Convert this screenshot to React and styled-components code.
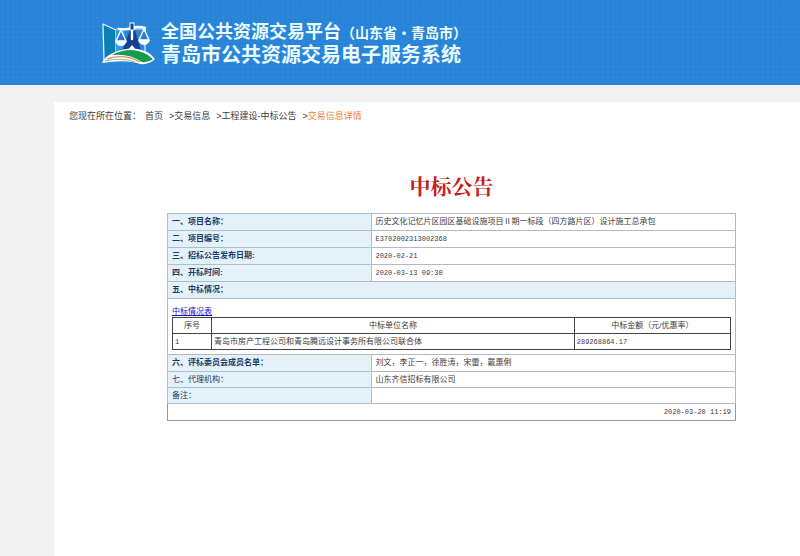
import React from 'react';
import styled, { createGlobalStyle } from 'styled-components';

const crumbs = ['交易信息', '工程建设-中标公告'];

const info = [
  { label: '一、项目名称：', value: '历史文化记忆片区园区基础设施项目Ⅱ期一标段（四方路片区）设计施工总承包' },
  { label: '二、项目编号：', value: 'E3702002313002368', code: true },
  { label: '三、招标公告发布日期:', value: '2020-02-21', code: true },
  { label: '四、开标时间:', value: '2020-03-13 09:30', code: true },
];

const extra = [
  { label: '六、评标委员会成员名单：', value: '刘文，李正一，徐胜涛，宋雷，戴惠俐' },
  { label: '七、代理机构：', value: '山东齐信招标有限公司', plain: true },
  { label: '备注：', value: '', plain: true },
];

const Logo = () => (
  <svg width="54" height="44" viewBox="0 0 54 44" aria-hidden="true">
    <path d="M1 2 L14 8 V33 L2 38 Z" fill="#0d7fb4" stroke="#e9fbff" strokeWidth="1.2" strokeLinejoin="round" />
    <path d="M14 7 H23 V31 L14 33 Z" fill="#2aa0dc" />
    <path d="M14 7 H43 V31" fill="none" stroke="#d8f4ff" strokeWidth="1.2" />
    <path d="M28 8 H33 L39 29 H20 Z" fill="#173f96" />
    <path d="M30 9 V17 M17 7 Q24 8 30 6 Q36 4 43 6" fill="none" stroke="#fff" strokeWidth="2.4" strokeLinecap="round" />
    <rect x="28" y="1" width="4" height="7" fill="#173f96" stroke="#fff" strokeWidth="1" />
    <path d="M19 8 L14 19 H24 Z M42 7 L37 18 H47 Z" fill="#2b79cf" stroke="#fff" strokeWidth="1.4" strokeLinejoin="round" />
    <path d="M13 19 H25 Q23 24 19 24 Q15 24 13 19 Z M36 18 H48 Q46 23 42 23 Q38 23 36 18 Z" fill="#fff" />
    <path d="M25 29 L30 23 L35 29 Z" fill="#fff" />
    <path d="M0 41 Q3 34 13 30 Q25 25 36 27 Q47 29 53 37 Q47 43 38 42 Q25 37 0 41 Z" fill="#fff" />
    <path d="M10 33 Q19 28 30 28 Q43 29 51 37 Q46 41 40 40 Q27 31 10 33 Z" fill="#159b50" />
    <path d="M5 37 Q22 31 38 40" fill="none" stroke="#e8935c" strokeWidth="1.4" />
    <path d="M3 39 Q18 35 33 40" fill="none" stroke="#86c58a" strokeWidth="1" />
  </svg>
);

const App = () => {
  return (
    <>
      <GlobalStyle />
      <Header>
        <Logo />
        <Brand>
          <BrandLine>
            全国公共资源交易平台<Region>（山东省・青岛市）</Region>
          </BrandLine>
          <SystemName>青岛市公共资源交易电子服务系统</SystemName>
        </Brand>
      </Header>
      <Page>
        <Crumbs>
          <span>您现在所在位置：</span>
          <CrumbList>
            <CrumbLink href="#">首页</CrumbLink>
            {crumbs.map((name) => (
              <span key={name}>
                &gt;<CrumbLink href="#">{name}</CrumbLink>
              </span>
            ))}
            <span>
              &gt;<Current>交易信息详情</Current>
            </span>
          </CrumbList>
        </Crumbs>
        <Notice>
          <Title>中标公告</Title>
          <InfoTable>
            <colgroup>
              <LabelCol />
              <col />
            </colgroup>
            <tbody>
              {info.map((row) => (
                <tr key={row.label}>
                  <Label scope="row">{row.label}</Label>
                  <Value $code={row.code}>{row.value}</Value>
                </tr>
              ))}
              <tr>
                <Label scope="row" colSpan={2}>五、中标情况：</Label>
              </tr>
              <tr>
                <BidCell colSpan={2}>
                  <BidLink href="#bids">中标情况表</BidLink>
                  <BidTable id="bids">
                    <colgroup>
                      <NoCol />
                      <UnitCol />
                      <col />
                    </colgroup>
                    <thead>
                      <tr>
                        <th>序号</th>
                        <th>中标单位名称</th>
                        <th>中标金额（元/优惠率）</th>
                      </tr>
                    </thead>
                    <tbody>
                      <tr>
                        <td><Code>1</Code></td>
                        <td>青岛市房产工程公司和青岛腾远设计事务所有限公司联合体</td>
                        <td><Code>289268864.17</Code></td>
                      </tr>
                    </tbody>
                  </BidTable>
                </BidCell>
              </tr>
              {extra.map((row) => (
                <tr key={row.label}>
                  <Label scope="row" $plain={row.plain}>{row.label}</Label>
                  <Value>{row.value}</Value>
                </tr>
              ))}
              <tr>
                <Stamp colSpan={2}>2020-03-20 11:19</Stamp>
              </tr>
            </tbody>
          </InfoTable>
        </Notice>
      </Page>
    </>
  );
};

const GlobalStyle = createGlobalStyle`
  * {
    box-sizing: border-box;
  }
  html {
    height: 100%;
  }
  body {
    height: 100%;
    margin: 0;
    background: #f2f2f2;
    color: #3c3c3c;
    font-family: "Liberation Sans", "Noto Sans CJK SC", sans-serif;
    font-size: 8px;
  }
  #root {
    display: flex;
    flex-direction: column;
    min-height: 100%;
  }
`

const Header = styled.header`
  display: flex;
  align-items: center;
  gap: 5px;
  height: 85px;
  padding: 2px 0 0 102px;
  background-color: #2a86d9;
  background-image:
    repeating-linear-gradient(90deg, rgba(10, 90, 190, 0.07) 0 1px, transparent 1px 5px),
    repeating-linear-gradient(0deg, rgba(10, 90, 190, 0.07) 0 1px, transparent 1px 5px);
`

const Brand = styled.div`
  color: #e9fbff;
  font-weight: 700;
  white-space: nowrap;
`

const BrandLine = styled.div`
  font-size: 18px;
  line-height: 22px;
`

const Region = styled.span`
  font-size: 14px;
`

const SystemName = styled.div`
  font-size: 20px;
  line-height: 22px;
`

const Page = styled.main`
  flex: 1;
  margin: 17px 0 0 54px;
  padding: 7px 0 0 15px;
  background: #fff;
`

const Crumbs = styled.nav`
  display: flex;
  gap: 4px;
  font-size: 9px;
  line-height: 14px;
  white-space: nowrap;
`

const CrumbList = styled.div`
  display: flex;
  gap: 6px;
`

const CrumbLink = styled.a`
  color: inherit;
  text-decoration: none;
`

const Current = styled.span`
  color: #f0843a;
`

const Notice = styled.section`
  margin: 48px 64px 0 98px;
`

const Title = styled.h1`
  margin: 0 0 10px;
  color: #c32020;
  font-family: "Liberation Serif", "Noto Serif CJK SC", "Noto Sans CJK SC", serif;
  font-size: 21px;
  font-weight: 700;
  line-height: 32px;
  text-align: center;
`

const InfoTable = styled.table`
  width: 100%;
  table-layout: fixed;
  border-collapse: collapse;
  border: 1px solid #999;
`

const LabelCol = styled.col`
  width: 36%;
`

const Label = styled.th`
  height: ${props => props.$plain ? '16px' : '17px'};
  padding: 0 4px;
  border: 1px solid #a9bfcb;
  background: #e4f1f8;
  color: #1b3c66;
  font-weight: ${props => props.$plain ? 400 : 700};
  line-height: 12px;
  text-align: left;
`

const Value = styled.td`
  padding: 0 3px;
  border: 1px solid #b5b9bc;
  font-family: ${props => props.$code ? '"Liberation Mono", monospace' : 'inherit'};
  font-size: ${props => props.$code ? '7px' : '8px'};
  line-height: 12px;
`

const BidCell = styled.td`
  padding: 7px 4px 4px;
  border: 1px solid #b5b9bc;
`

const BidLink = styled.a`
  display: block;
  color: #1a0dcc;
  line-height: 11px;
`

const BidTable = styled.table`
  width: 100%;
  table-layout: fixed;
  border-collapse: collapse;

  th,
  td {
    height: 16px;
    padding: 0 2px;
    border: 1px solid #444;
    font-weight: 400;
    line-height: 12px;
  }
`

const NoCol = styled.col`
  width: 7%;
`

const UnitCol = styled.col`
  width: 65%;
`

const Code = styled.span`
  font-family: "Liberation Mono", monospace;
  font-size: 7px;
`

const Stamp = styled.td`
  height: 17px;
  padding: 0 4px;
  font-family: "Liberation Mono", monospace;
  font-size: 7px;
  line-height: 12px;
  text-align: right;
`

export default App
